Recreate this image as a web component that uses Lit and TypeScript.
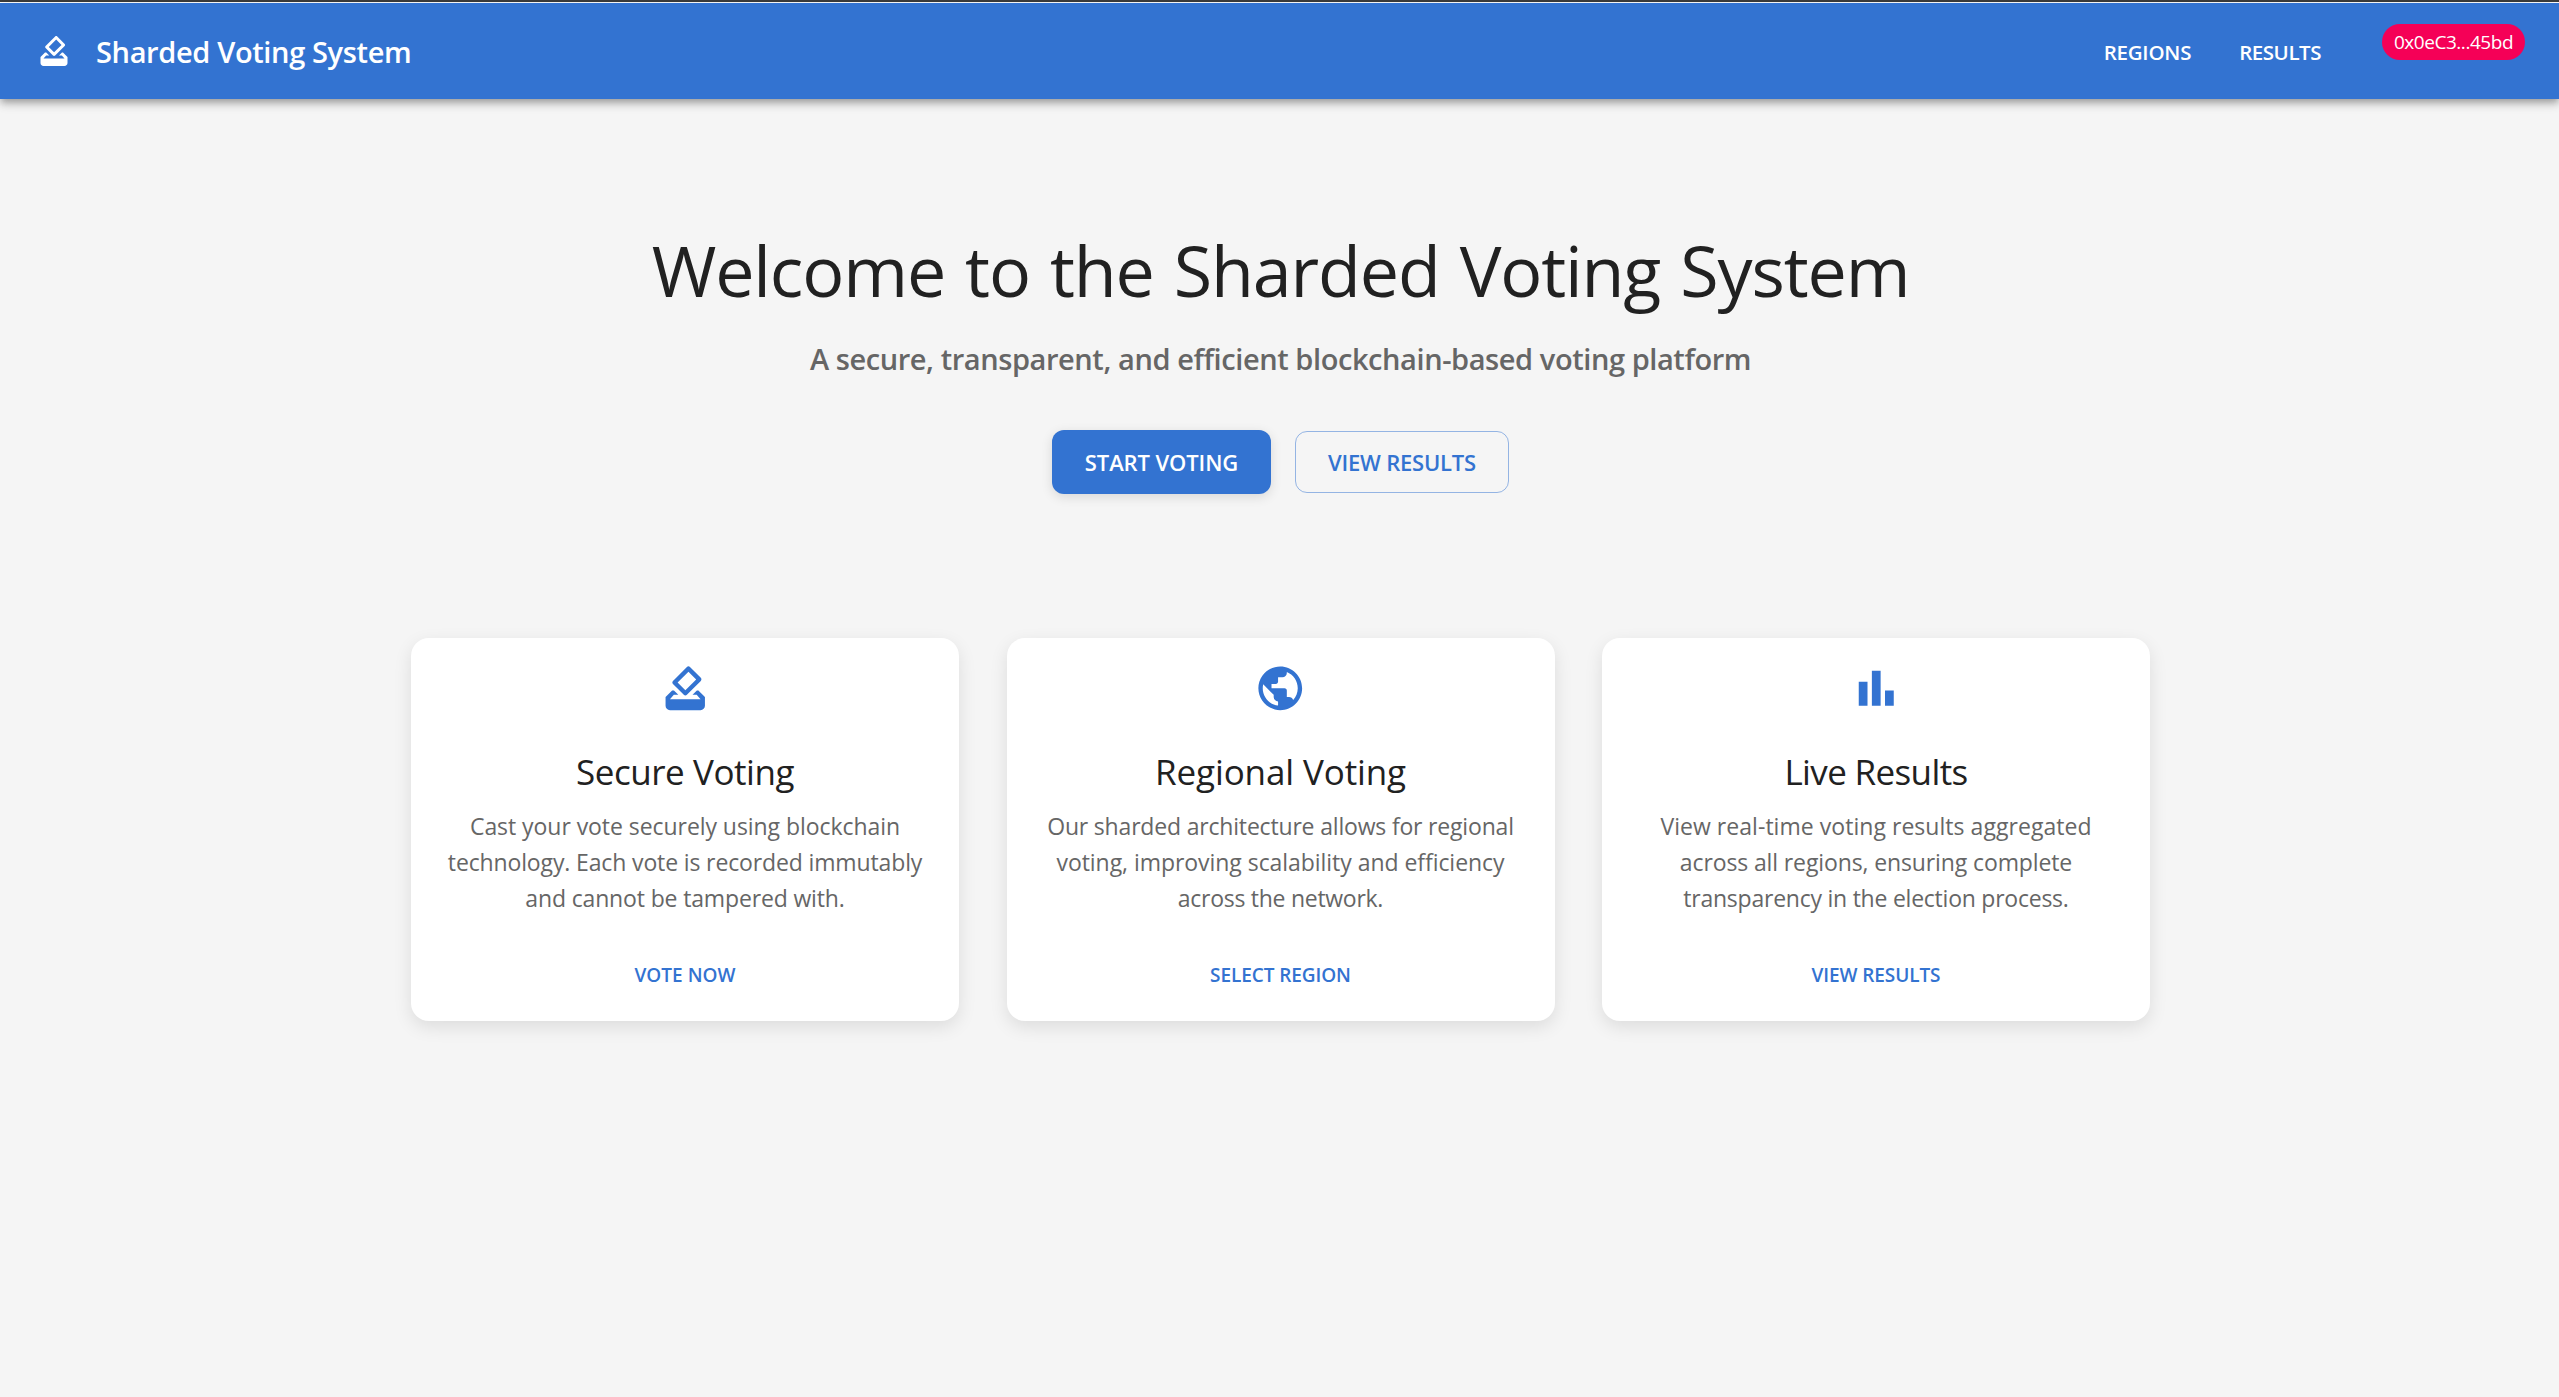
import { LitElement, html, css, svg } from "lit";
import { styleMap } from "lit/directives/style-map.js";

/** A line of text with its tracking in pixels. */
type Line = [text: string, tracking: number];

interface Feature {
  icon: string;
  title: Line;
  body: Line[];
  action: Line;
}

const ICONS: Record<string, string> = {
  vote: "M18 13h-.68l-2 2h1.91L19 17H5l1.78-2h2.05l-2-2H6l-3 3v4c0 1.1.89 2 1.99 2H19c1.1 0 2-.89 2-2v-4l-3-3zm-1-5.05-4.95 4.95-3.54-3.54 4.95-4.95L17 7.95zm-4.24-5.66L6.39 8.66c-.39.39-.39 1.02 0 1.41l4.95 4.95c.39.39 1.02.39 1.41 0l6.36-6.36c.39-.39.39-1.02 0-1.41L14.16 2.3c-.38-.4-1.01-.4-1.4-.01z",
  globe: "M12 2C6.48 2 2 6.48 2 12s4.48 10 10 10 10-4.48 10-10S17.52 2 12 2zm-1 17.93c-3.95-.49-7-3.85-7-7.93 0-.62.08-1.21.21-1.79L9 15v1c0 1.1.9 2 2 2v1.93zm6.9-2.54c-.26-.81-1-1.39-1.9-1.39h-1v-3c0-.55-.45-1-1-1H8v-2h2c.55 0 1-.45 1-1V7h2c1.1 0 2-.9 2-2v-.41c2.93 1.19 5 4.06 5 7.41 0 2.08-.8 3.97-2.1 5.39z",
  bars: "M4 9h4v11H4zm12 4h4v7h-4zm-6-9h4v16h-4z",
};

const FEATURES: Feature[] = [
  {
    icon: "vote",
    title: ["Secure Voting", -0.443],
    body: [
      ["Cast your vote securely using blockchain", -0.057],
      ["technology. Each vote is recorded immutably", -0.134],
      ["and cannot be tampered with.", -0.147],
    ],
    action: ["VOTE NOW", 0.014],
  },
  {
    icon: "globe",
    title: ["Regional Voting", -0.12],
    body: [
      ["Our sharded architecture allows for regional", -0.18],
      ["voting, improving scalability and efficiency", -0.049],
      ["across the network.", -0.277],
    ],
    action: ["SELECT REGION", -0.081],
  },
  {
    icon: "bars",
    title: ["Live Results", -0.64],
    body: [
      ["View real-time voting results aggregated", 0.041],
      ["across all regions, ensuring complete", -0.118],
      ["transparency in the election process.", -0.237],
    ],
    action: ["VIEW RESULTS", -0.09],
  },
];

const icon = (name: string) =>
  html`<svg class="icon" viewBox="0 0 24 24" aria-hidden="true">${svg`<path d=${ICONS[name]}></path>`}</svg>`;

const line = ([text, tracking]: Line) =>
  html`<span class="line" style=${styleMap({ letterSpacing: `${tracking}px` })}>${text}</span>`;

class AppRoot extends LitElement {
  static styles = css`
    :host {
      display: block;
      box-sizing: border-box;
      min-height: 100vh;
      background: #f5f5f5;
      color: #212121;
      font-family: "Open Sans", "Noto Sans", sans-serif;
      overflow: hidden;
    }
    * {
      box-sizing: border-box;
      margin: 0;
    }
    .icon {
      display: block;
      width: 1em;
      height: 1em;
      fill: currentColor;
    }
    .line {
      display: block;
      white-space: nowrap;
    }
    .edge {
      height: 3px;
      background: #3c3c3c;
      border-bottom: 1px solid #fff;
    }
    .bar {
      display: flex;
      align-items: center;
      height: 96px;
      padding: 0 34px 0 36px;
      background: #3373d1;
      color: #fff;
      box-shadow: 0 3px 6px -1.5px rgba(0, 0, 0, 0.2),
        0 6px 7.5px 0 rgba(0, 0, 0, 0.14), 0 1.5px 15px 0 rgba(0, 0, 0, 0.12);
    }
    .bar .icon {
      font-size: 36px;
    }
    .brand {
      flex: 1;
      padding: 2px 0 0 24px;
      font-size: 29px;
      font-weight: 600;
      letter-spacing: -0.358px;
      line-height: 48px;
    }
    .nav {
      display: flex;
      gap: 48px;
      margin-right: 61px;
      padding-top: 1px;
      font-size: 20.5px;
      font-weight: 600;
      line-height: 36px;
    }
    .account {
      align-self: flex-start;
      width: 143px;
      height: 36px;
      margin-top: 21px;
      border-radius: 18px;
      background: #f50057;
      font-size: 19px;
      line-height: 36px;
      letter-spacing: -0.458px;
      text-align: center;
    }
    .page {
      width: 1741px;
      margin: 0 auto;
      padding: 126px 0 0 2px;
    }
    .hero {
      display: flex;
      flex-direction: column;
      align-items: center;
      margin-bottom: 144px;
    }
    h1 {
      font-size: 70px;
      font-weight: 400;
      line-height: 90px;
      letter-spacing: -1.137px;
      word-spacing: 3px;
      white-space: nowrap;
    }
    .lead {
      margin: 20px 0 47px;
      color: #666;
      font-size: 29px;
      font-weight: 600;
      line-height: 48px;
      letter-spacing: -0.42px;
      white-space: nowrap;
    }
    .actions {
      display: flex;
      align-items: center;
      gap: 24px;
    }
    .button {
      display: flex;
      align-items: center;
      justify-content: center;
      padding-bottom: 1px;
      border-radius: 12px;
      font-size: 22px;
      font-weight: 600;
    }
    .primary {
      width: 219px;
      height: 64px;
      background: #3373d1;
      color: #fff;
      box-shadow: 0 3px 12px rgba(0, 0, 0, 0.12);
    }
    .secondary {
      width: 214px;
      height: 62px;
      border: 1px solid rgba(51, 115, 209, 0.5);
      color: #3373d1;
    }
    .cards {
      display: grid;
      grid-template-columns: repeat(3, 1fr);
      gap: 47.5px;
    }
    .card {
      display: flex;
      flex-direction: column;
      align-items: center;
      height: 383px;
      padding-top: 24px;
      border-radius: 18px;
      background: #fff;
      box-shadow: 0 6px 18px rgba(0, 0, 0, 0.1);
    }
    .card .icon {
      color: #3373d1;
      font-size: 52.5px;
    }
    h2 {
      margin-top: 33.5px;
      font-size: 35px;
      font-weight: 400;
      line-height: 48px;
    }
    .body {
      display: flex;
      flex-direction: column;
      align-items: center;
      margin: 12px 0 42px;
      color: #666;
      font-size: 23px;
      line-height: 36px;
    }
    .link {
      color: #3373d1;
      font-size: 19px;
      font-weight: 600;
      line-height: 34px;
    }
  `;

  render() {
    return html`
      <div class="edge"></div>
      <header class="bar">
        ${icon("vote")}
        <div class="brand">Sharded Voting System</div>
        <nav class="nav">${line(["REGIONS", -0.226])}${line(["RESULTS", -0.459])}</nav>
        <div class="account">0x0eC3...45bd</div>
      </header>
      <main class="page">
        <section class="hero">
          <h1>Welcome to the Sharded Voting System</h1>
          <p class="lead">A secure, transparent, and efficient blockchain-based voting platform</p>
          <div class="actions">
            <div class="button primary">${line(["START VOTING", -0.105])}</div>
            <div class="button secondary">${line(["VIEW RESULTS", -0.214])}</div>
          </div>
        </section>
        <section class="cards">
          ${FEATURES.map(
            (f) => html`
              <article class="card">
                ${icon(f.icon)}
                <h2>${line(f.title)}</h2>
                <div class="body">${f.body.map(line)}</div>
                <div class="link">${line(f.action)}</div>
              </article>
            `,
          )}
        </section>
      </main>
    `;
  }
}
customElements.define("app-root", AppRoot);
